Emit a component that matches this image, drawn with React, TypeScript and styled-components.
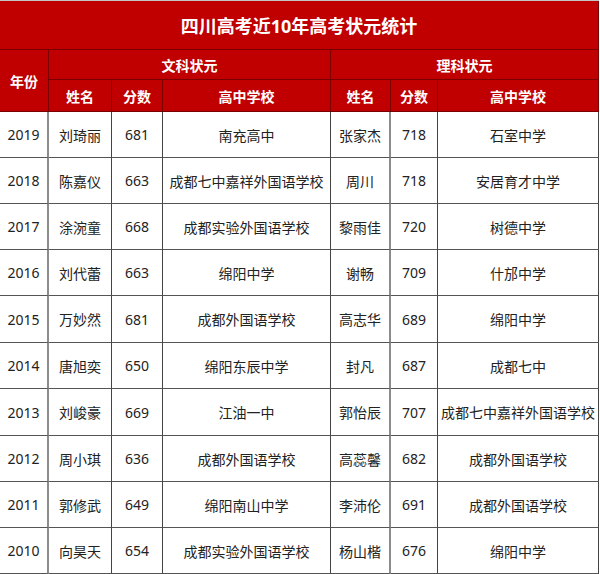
import styled, { createGlobalStyle } from 'styled-components';

const GlobalStyle = createGlobalStyle`
  html, body {
    margin: 0;
    padding: 0;
    background: #fff;
  }
  body {
    font-family: "Noto Sans", "Noto Sans CJK SC", sans-serif;
  }
`;

const RED = '#c00000';
const RED_LINE = '#7a0000';

const Sheet = styled.div`
  display: grid;
  grid-template-columns: 49px 63px 51px 168px 60px 47px 161px;
  grid-template-rows: 49px 30px 32px 46px 46px 46px 46px 47px 46px 47px 46px 46px 46px;
  width: 599px;
  border-top: 1px solid #c4c4c4;
`;

const Cell = styled.div`
  box-sizing: border-box;
  display: flex;
  align-items: center;
  justify-content: center;
  white-space: nowrap;
  overflow: hidden;
`;

const TitleCell = styled(Cell)`
  grid-column: 1 / -1;
  background: ${RED};
  color: #fff;
  font-size: 18px;
  font-weight: 700;
  border-bottom: 1px solid ${RED_LINE};
  border-right: 1px solid ${RED_LINE};
`;

const HeadCell = styled(Cell)<{ $col?: string; $row?: string }>`
  grid-column: ${({ $col }) => $col || 'auto'};
  grid-row: ${({ $row }) => $row || 'auto'};
  background: ${RED};
  color: #fff;
  font-size: 14px;
  font-weight: 700;
  border-bottom: 1px solid ${RED_LINE};
  border-right: 1px solid ${RED_LINE};
`;

const DataCell = styled(Cell)<{ $soft?: boolean }>`
  color: #222;
  font-size: 14px;
  border-bottom: 1px solid #555;
  border-right: ${({ $soft }) => ($soft ? '2px solid #8c8c8c' : '1px solid #444')};
`;

type Row = {
  year: string;
  artsName: string;
  artsScore: string;
  artsSchool: string;
  sciName: string;
  sciScore: string;
  sciSchool: string;
};

const rows: Row[] = [
  { year: '2019', artsName: '刘琦丽', artsScore: '681', artsSchool: '南充高中', sciName: '张家杰', sciScore: '718', sciSchool: '石室中学' },
  { year: '2018', artsName: '陈嘉仪', artsScore: '663', artsSchool: '成都七中嘉祥外国语学校', sciName: '周川', sciScore: '718', sciSchool: '安居育才中学' },
  { year: '2017', artsName: '涂涴童', artsScore: '668', artsSchool: '成都实验外国语学校', sciName: '黎雨佳', sciScore: '720', sciSchool: '树德中学' },
  { year: '2016', artsName: '刘代蕾', artsScore: '663', artsSchool: '绵阳中学', sciName: '谢畅', sciScore: '709', sciSchool: '什邡中学' },
  { year: '2015', artsName: '万妙然', artsScore: '681', artsSchool: '成都外国语学校', sciName: '高志华', sciScore: '689', sciSchool: '绵阳中学' },
  { year: '2014', artsName: '唐旭奕', artsScore: '650', artsSchool: '绵阳东辰中学', sciName: '封凡', sciScore: '687', sciSchool: '成都七中' },
  { year: '2013', artsName: '刘峻豪', artsScore: '669', artsSchool: '江油一中', sciName: '郭怡辰', sciScore: '707', sciSchool: '成都七中嘉祥外国语学校' },
  { year: '2012', artsName: '周小琪', artsScore: '636', artsSchool: '成都外国语学校', sciName: '高蕊馨', sciScore: '682', sciSchool: '成都外国语学校' },
  { year: '2011', artsName: '郭修武', artsScore: '649', artsSchool: '绵阳南山中学', sciName: '李沛伦', sciScore: '691', sciSchool: '成都外国语学校' },
  { year: '2010', artsName: '向昊天', artsScore: '654', artsSchool: '成都实验外国语学校', sciName: '杨山楷', sciScore: '676', sciSchool: '绵阳中学' },
];

const subHeads = ['姓名', '分数', '高中学校', '姓名', '分数', '高中学校'];

export default function App() {
  return (
    <>
      <GlobalStyle />
      <Sheet>
        <TitleCell>四川高考近10年高考状元统计</TitleCell>
        <HeadCell $col="1" $row="2 / span 2">年份</HeadCell>
        <HeadCell $col="2 / span 3" $row="2">文科状元</HeadCell>
        <HeadCell $col="5 / span 3" $row="2">理科状元</HeadCell>
        {subHeads.map((h, i) => (
          <HeadCell key={i}>{h}</HeadCell>
        ))}
        {rows.map((r) => (
          <RowCells key={r.year} row={r} />
        ))}
      </Sheet>
    </>
  );
}

function RowCells({ row }: { row: Row }) {
  return (
    <>
      <DataCell $soft>{row.year}</DataCell>
      <DataCell>{row.artsName}</DataCell>
      <DataCell>{row.artsScore}</DataCell>
      <DataCell>{row.artsSchool}</DataCell>
      <DataCell $soft>{row.sciName}</DataCell>
      <DataCell>{row.sciScore}</DataCell>
      <DataCell>{row.sciSchool}</DataCell>
    </>
  );
}
